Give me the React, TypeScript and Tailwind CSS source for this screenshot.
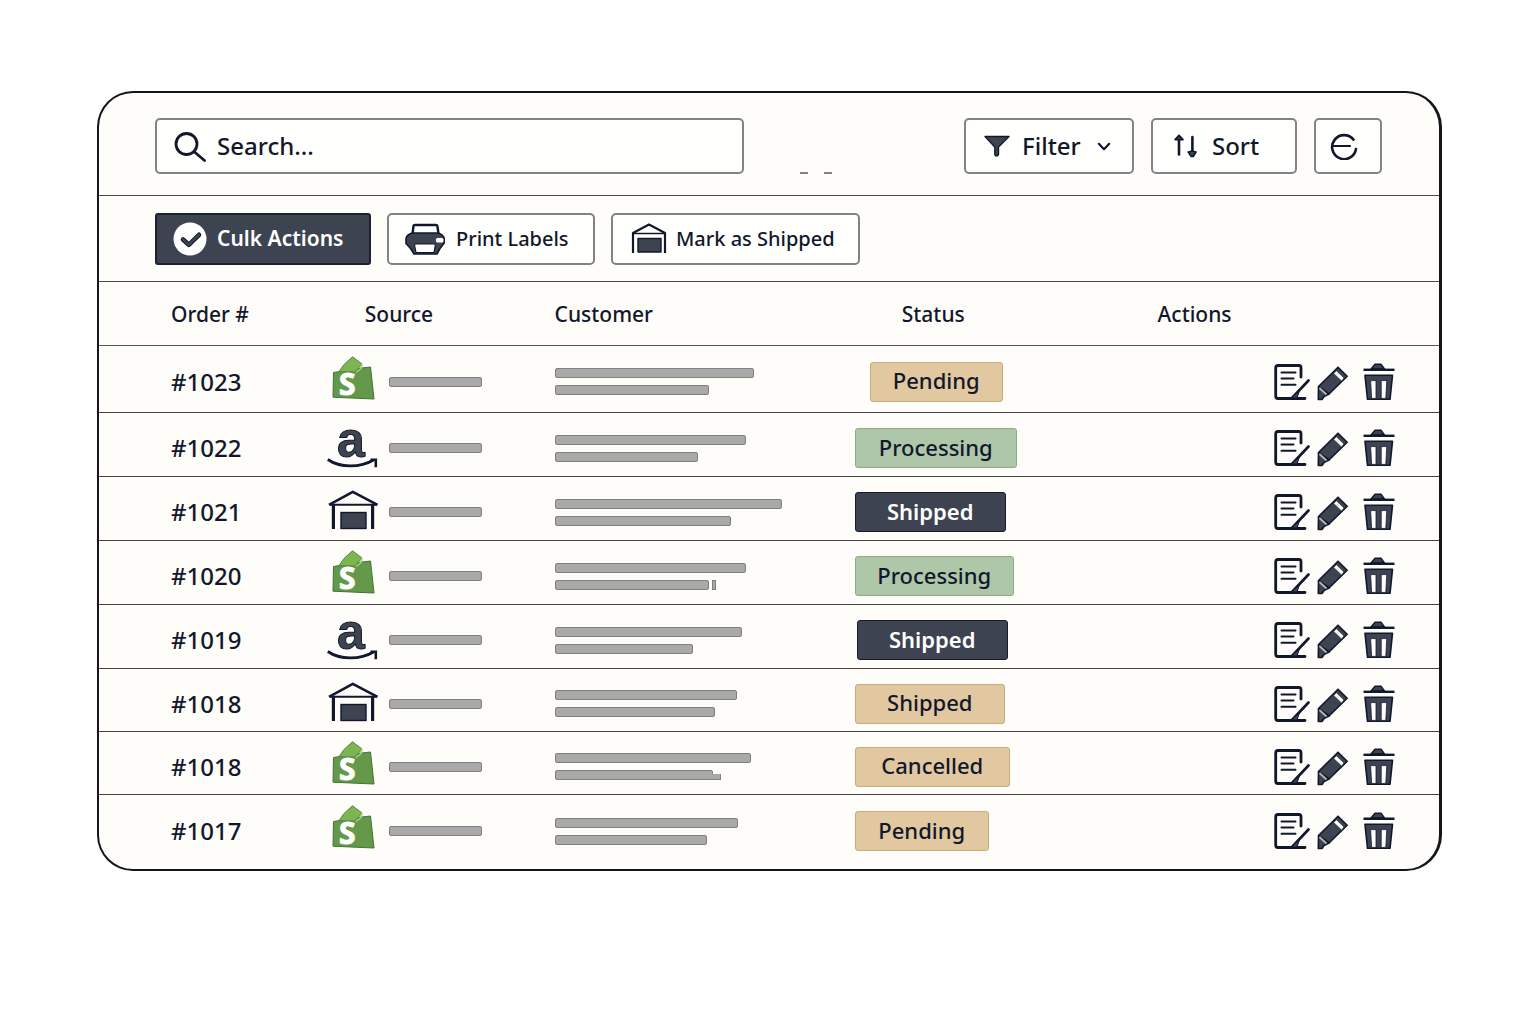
import React from "react";

type Source = "shopify" | "amazon" | "warehouse";
type Tone = "sand" | "sage" | "slate";

interface Order {
  id: string;
  source: Source;
  lines: [number, number];
  tail?: "split" | "step";
  status: string;
  tone: Tone;
  badge: string;
  height: string;
}

const INK = "#12182b";
const SLATE = "#3d4350";

const orders: Order[] = [
  { id: "#1023", source: "shopify", lines: [199, 154], status: "Pending", tone: "sand", badge: "ml-[15px] w-[133px]", height: "h-[67px]" },
  { id: "#1022", source: "amazon", lines: [191, 143], status: "Processing", tone: "sage", badge: "w-[162px]", height: "h-16" },
  { id: "#1021", source: "warehouse", lines: [227, 176], status: "Shipped", tone: "slate", badge: "w-[151px]", height: "h-16" },
  { id: "#1020", source: "shopify", lines: [191, 154], tail: "split", status: "Processing", tone: "sage", badge: "w-[159px]", height: "h-16" },
  { id: "#1019", source: "amazon", lines: [187, 138], status: "Shipped", tone: "slate", badge: "ml-0.5 w-[151px]", height: "h-16" },
  { id: "#1018", source: "warehouse", lines: [182, 160], status: "Shipped", tone: "sand", badge: "w-[150px]", height: "h-[63px]" },
  { id: "#1018", source: "shopify", lines: [196, 158], tail: "step", status: "Cancelled", tone: "sand", badge: "w-[155px]", height: "h-[63px]" },
  { id: "#1017", source: "shopify", lines: [183, 152], status: "Pending", tone: "sand", badge: "w-[134px]", height: "h-[74px]" },
];

const tones: Record<Tone, string> = {
  sand: "border-[#c9ab7c] bg-[#e2c8a0] font-medium text-[#12182b]",
  sage: "border-[#8cab8c] bg-[#afc7a9] font-medium text-[#12182b]",
  slate: "border-[#161b2a] bg-[#3d4350] font-semibold text-white",
};

function SearchIcon() {
  return (
    <svg className="h-8 w-8 shrink-0" viewBox="0 0 32 32" fill="none" stroke={INK} strokeWidth="2.8" strokeLinecap="round" aria-hidden="true">
      <circle cx="12.5" cy="14" r="10.5" />
      <path d="M20.5 22L30.5 30.5" />
    </svg>
  );
}

function FunnelIcon() {
  return (
    <svg className="h-[22px] w-[26px]" viewBox="0 0 26 22" fill={SLATE} stroke={INK} strokeWidth="1.4" strokeLinejoin="round" aria-hidden="true">
      <path d="M1 1.5H25L14.5 12V19.5L13.5 20.8H11.5L10.8 19.5V12Z" />
    </svg>
  );
}

function ChevronIcon() {
  return (
    <svg className="h-2.5 w-[14px]" viewBox="0 0 14 10" fill="none" stroke={INK} strokeWidth="2.2" strokeLinecap="round" strokeLinejoin="round" aria-hidden="true">
      <path d="M1.8 2.8L7 8.2L12.2 2.8" />
    </svg>
  );
}

function SortIcon() {
  return (
    <svg className="h-6 w-6" viewBox="0 0 24 24" fill={SLATE} stroke={INK} strokeLinecap="round" strokeLinejoin="round" aria-hidden="true">
      <path d="M6 3V20.5" strokeWidth="2.6" />
      <path d="M6 1.2L10 5.6H2Z" strokeWidth="1.6" />
      <path d="M19.4 3V18" strokeWidth="2.6" />
      <path d="M15.2 18L19.4 17L23 18L20.4 22.4H18Z" strokeWidth="1.6" />
    </svg>
  );
}

function ArcIcon() {
  return (
    <svg className="h-7 w-7" viewBox="0 0 28 28" fill="none" stroke={INK} strokeWidth="2.6" strokeLinecap="round" aria-hidden="true">
      <path d="M23.5 7.6A12 12 0 1 0 26 17" />
      <path d="M2.5 14H20" strokeWidth="2.2" />
    </svg>
  );
}

function CheckBadgeIcon() {
  return (
    <svg className="h-[34px] w-[34px]" viewBox="0 0 34 34" aria-hidden="true">
      <circle cx="17" cy="17" r="16.5" fill="#ffffff" />
      <path d="M10 17.5L15.8 22.8L26 12.8" fill="none" stroke={INK} strokeWidth="4.6" strokeLinecap="round" strokeLinejoin="round" />
      <path d="M10 17.5L15.8 22.8L26 12.8" fill="none" stroke={SLATE} strokeWidth="2.6" strokeLinecap="round" strokeLinejoin="round" />
    </svg>
  );
}

function PrinterIcon() {
  return (
    <svg className="h-8 w-10" viewBox="0 0 40 32" stroke={INK} strokeLinejoin="round" aria-hidden="true">
      <path d="M7.5 11L8.5 3Q8.6 2 10 2H31Q32.2 2 32.4 3L33.5 11" fill="#fff" strokeWidth="2.4" />
      <path d="M7 10H33.5Q38.5 12 39.2 15.5V20L35 25.5L32 31H9L5.5 25.5L1 20.5V15.5Q1.5 12 7 10Z" fill={SLATE} strokeWidth="1.6" />
      <path d="M10.5 21H29Q30.5 21 30.3 22.5L29 29.5H11L9.6 22.5Q9.4 21 10.5 21Z" fill="#fff" strokeWidth="1.2" />
      <rect x="31" y="15" width="7.5" height="4.4" rx="1.5" fill="#fff" stroke="none" />
    </svg>
  );
}

function WarehouseSmallIcon() {
  return (
    <svg className="h-8 w-9" viewBox="0 0 36 32" fill="none" stroke={INK} strokeWidth="2.2" strokeLinejoin="round" aria-hidden="true">
      <path d="M2 30V10L18 1.5L34 10V30" />
      <path d="M2 10.5H34" strokeWidth="1.6" />
      <rect x="7" y="15.5" width="23" height="13.5" fill={SLATE} strokeWidth="1.4" />
    </svg>
  );
}

function SourceIcon({ source }: { source: Source }) {
  if (source === "shopify") {
    return (
      <svg className="h-[52px] w-[52px]" viewBox="0 0 52 52" role="img" aria-label="Shopify">
        <path d="M6.5 16.5L35 12L43.5 11L47 43L6 41.2Z" fill="#64994b" stroke="#3f7434" strokeWidth="1" strokeLinejoin="round" />
        <path d="M12 15.7L17 8.5L25.5 0.8L35 8L28 16Z" fill="#7db553" stroke="#4d8a3b" strokeWidth="1" strokeLinejoin="round" />
        <path d="M35 8L34 12.5L29 16.5" fill="none" stroke="#a3cf7d" strokeWidth="1.6" />
        <text x="12" y="39.2" fill="#ffffff" stroke="#ffffff" strokeWidth="1" fontFamily="'Noto Sans', sans-serif" fontWeight="700" fontSize="30">S</text>
      </svg>
    );
  }
  if (source === "amazon") {
    return (
      <svg className="h-[52px] w-[52px] overflow-visible" viewBox="0 0 52 52" role="img" aria-label="Amazon">
        <text x="10" y="34.5" fill={SLATE} stroke={INK} strokeWidth="1" fontFamily="'Liberation Sans', sans-serif" fontWeight="700" fontSize="50">a</text>
        <path d="M0.8 37.5C13 46 33 46 46.5 38" fill="none" stroke={INK} strokeWidth="2.8" />
        <path d="M43.5 37.8H48.8V45.3" fill="none" stroke={INK} strokeWidth="2.6" />
      </svg>
    );
  }
  return (
    <svg className="h-[52px] w-[52px]" viewBox="0 0 52 52" fill="none" stroke={INK} strokeWidth="2.6" role="img" aria-label="Warehouse">
      <path d="M2 18.8L25.8 5.8L50.5 18.8" strokeLinejoin="round" />
      <path d="M3 18.8H50" strokeWidth="2" />
      <path d="M6.4 19V43M45.6 19V43" strokeWidth="3.2" />
      <rect x="14" y="26.5" width="25" height="16" fill={SLATE} strokeWidth="1.4" />
    </svg>
  );
}

function NoteIcon() {
  return (
    <svg className="h-[38px] w-9" viewBox="0 0 36 38" fill="none" stroke={INK} strokeWidth="2.8" strokeLinecap="round" strokeLinejoin="round" aria-hidden="true">
      <path d="M27 14V4.5Q27 2.5 25 2.5H4Q1.7 2.5 1.7 5V33Q1.7 35.5 4 35.5H31" />
      <path d="M7.5 9.5H21.5M7.5 15.5H19.5M7.5 21.7H21.5" strokeWidth="2" />
      <path d="M34.5 17.5L18 35" strokeWidth="2.6" />
      <path d="M21 31.5L18 35H23L25 29Z" fill={SLATE} strokeWidth="1" />
    </svg>
  );
}

function PencilIcon() {
  return (
    <svg className="h-[38px] w-8" viewBox="0 0 32 38" fill={SLATE} stroke={INK} strokeWidth="1.6" strokeLinejoin="round" aria-hidden="true">
      <path d="M21 4.2L30.2 13.3L12 31L1.5 23.5Z" />
      <path d="M16.6 10.4L19.4 7.8L27 15L24.6 18Z" fill="#fff" strokeWidth="0.6" />
      <path d="M1.5 24L1.3 36.5H5L7 33.5L12 31Z" />
      <path d="M2.4 25L9.5 31.5" stroke="#b4b6bd" strokeWidth="1.8" />
    </svg>
  );
}

function TrashIcon() {
  return (
    <svg className="h-[38px] w-8" viewBox="0 0 32 38" fill={SLATE} stroke={INK} strokeLinejoin="round" aria-hidden="true">
      <path d="M8 6L12 1.2H18L21.5 6Z" strokeWidth="1.4" />
      <path d="M0.5 6.8H31.5" strokeWidth="2.4" />
      <path d="M2 12.3H29.5L27 36.3H4.5Z" strokeWidth="1.6" />
      <path d="M7.6 17.6H13V35.4H8.6ZM18.2 17.6H23.8L22.8 35.4H18.2Z" fill="#fff" strokeWidth="0.8" />
    </svg>
  );
}

function Bar({ width }: { width: number }) {
  return <div className="h-2.5 rounded-[2px] border border-[#7f7f7f] bg-[#a9a9a9]" style={{ width }} />;
}

function CustomerLines({ lines, tail }: { lines: [number, number]; tail?: "split" | "step" }) {
  return (
    <div className="flex flex-col gap-[7px]">
      <Bar width={lines[0]} />
      <div className="flex items-end">
        <Bar width={lines[1]} />
        {tail === "split" && <div className="ml-[3px] h-2.5 w-1 border border-[#7f7f7f] bg-[#a9a9a9]" />}
        {tail === "step" && <div className="-ml-px h-1.5 w-[9px] border border-t-0 border-l-0 border-[#7f7f7f] bg-[#a9a9a9]" />}
      </div>
    </div>
  );
}

const outlined = "flex items-center rounded-[5px] border-2 border-[#828387] bg-[#fffffd] font-medium";

export default function App() {
  return (
    <main className="min-h-screen bg-white pt-[91px] pr-[94px] pb-16 pl-[97px] font-['Noto_Sans',sans-serif] text-[#12182b]">
      <section className="overflow-hidden rounded-[36px] border-2 border-r-[3px] border-[#14161c] bg-[#fefdf9]">
        <div className="flex items-start border-b border-[#4a4a4c] pt-[25px] pr-[57px] pb-[21px] pl-14">
          <label className="flex h-14 w-[48%] items-center gap-[11px] rounded-[5px] border-2 border-[#828387] bg-[#fffffd] px-[17px]">
            <SearchIcon />
            <input
              type="text"
              aria-label="Search orders"
              placeholder="Search..."
              className="w-full bg-transparent text-2xl font-medium outline-none placeholder:text-[#12182b]"
            />
          </label>
          <div className="ml-14 flex gap-4 self-end" aria-hidden="true">
            <span className="h-0.5 w-2 bg-[#828387]" />
            <span className="h-0.5 w-2 bg-[#828387]" />
          </div>
          <div className="ml-auto flex gap-[17px]">
            <button type="button" className={`${outlined} h-14 w-[170px] pl-[18px] text-2xl`}>
              <FunnelIcon />
              <span className="ml-3">Filter</span>
              <span className="ml-4"><ChevronIcon /></span>
            </button>
            <button type="button" className={`${outlined} h-14 w-[146px] gap-[15px] pl-5 text-2xl`}>
              <SortIcon />
              Sort
            </button>
            <button type="button" aria-label="Refresh" className={`${outlined} h-14 w-[68px] pl-[14px]`}>
              <ArcIcon />
            </button>
          </div>
        </div>

        <div className="flex gap-4 border-b border-[#4a4a4c] pt-[17px] pb-4 pl-14">
          <button type="button" className="flex h-[52px] w-[216px] items-center gap-2.5 rounded-[3px] border-2 border-[#1d2230] bg-[#3d4350] pl-4 text-[21px] font-semibold text-white">
            <CheckBadgeIcon />
            Culk Actions
          </button>
          <button type="button" className={`${outlined} h-[52px] w-[208px] gap-[11px] pl-4 text-xl`}>
            <PrinterIcon />
            Print Labels
          </button>
          <button type="button" className={`${outlined} h-[52px] w-[249px] gap-[9px] pl-[18px] text-xl`}>
            <WarehouseSmallIcon />
            Mark as Shipped
          </button>
        </div>

        <table className="w-full table-fixed border-separate border-spacing-0">
          <colgroup>
            <col className="w-[17%]" />
            <col className="w-[17%]" />
            <col className="w-[22.4%]" />
            <col className="w-[22.6%]" />
            <col />
          </colgroup>
          <thead>
            <tr className="h-16 text-left text-[21px] [&>th]:border-b [&>th]:border-[#5a5557] [&>th]:pt-[3px] [&>th]:font-medium">
              <th className="pl-[72px]">Order #</th>
              <th className="pl-[38px]">Source</th>
              <th>Customer</th>
              <th className="pl-[47px]">Status</th>
              <th>Actions</th>
            </tr>
          </thead>
          <tbody className="[&>tr>td]:border-b [&>tr>td]:border-[#4a4042] [&>tr>td]:pt-[7px] [&>tr:first-child>td]:pt-[5px] [&>tr:last-child>td]:border-b-0 [&>tr:last-child>td]:pt-0 [&>tr:last-child>td]:pb-0.5">
            {orders.map((order, index) => (
              <tr key={index} className={order.height}>
                <td className="pl-[72px] text-2xl leading-8 font-medium">{order.id}</td>
                <td>
                  <div className="flex items-center gap-2.5">
                    <SourceIcon source={order.source} />
                    <Bar width={93} />
                  </div>
                </td>
                <td><CustomerLines lines={order.lines} tail={order.tail} /></td>
                <td>
                  <div className={`flex h-10 items-center justify-center rounded-[3px] border pb-0.5 text-[22px] ${tones[order.tone]} ${order.badge}`}>
                    {order.status}
                  </div>
                </td>
                <td>
                  <div className="flex items-center justify-end pr-11">
                    <button type="button" aria-label={`Notes for ${order.id}`}><NoteIcon /></button>
                    <button type="button" aria-label={`Edit ${order.id}`} className="ml-[7px]"><PencilIcon /></button>
                    <button type="button" aria-label={`Delete ${order.id}`} className="ml-3.5"><TrashIcon /></button>
                  </div>
                </td>
              </tr>
            ))}
          </tbody>
        </table>
      </section>
    </main>
  );
}
